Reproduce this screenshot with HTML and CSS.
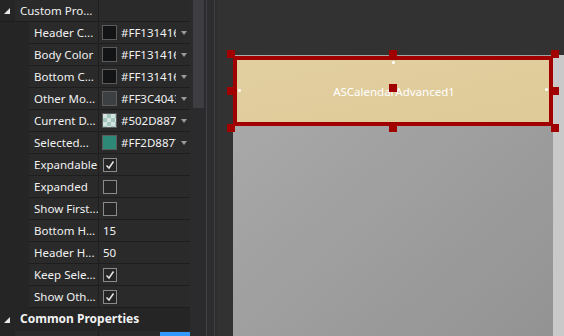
FILE: index.html
```html
<!DOCTYPE html>
<html lang="en">
<head>
    <meta charset="UTF-8">
    <meta name="viewport" content="width=device-width, initial-scale=1.0">
    <title>Designer</title>
    <link rel="stylesheet" href="styles.css">
</head>
<body>

<div class="props">
    <!-- Custom Properties -->
    <div class="cat">
        <div class="toggle">
            <svg width="7" height="7" viewBox="0 0 7 7"><polygon points="6,0 6,6 0,6" fill="#e8e8e8"/></svg>
        </div>
        <div class="cat-name">Custom Pro...</div>
        <div class="cat-value"></div>
    </div>

    <div class="row">
        <div class="name">Header C...</div>
        <div class="value"><span class="swatch" style="background:#131416"></span><span class="text">#FF131416</span><span class="drop"></span></div>
    </div>
    <div class="row">
        <div class="name">Body Color</div>
        <div class="value"><span class="swatch" style="background:#131416"></span><span class="text">#FF131416</span><span class="drop"></span></div>
    </div>
    <div class="row">
        <div class="name">Bottom C...</div>
        <div class="value"><span class="swatch" style="background:#131416"></span><span class="text">#FF131416</span><span class="drop"></span></div>
    </div>
    <div class="row">
        <div class="name">Other Mo...</div>
        <div class="value"><span class="swatch" style="background:#3c4043"></span><span class="text">#FF3C4043</span><span class="drop"></span></div>
    </div>
    <div class="row">
        <div class="name">Current D...</div>
        <div class="value"><span class="swatch checker"></span><span class="text">#502D8877</span><span class="drop"></span></div>
    </div>
    <div class="row">
        <div class="name">Selected...</div>
        <div class="value"><span class="swatch" style="background:#2d8877"></span><span class="text">#FF2D8877</span><span class="drop"></span></div>
    </div>
    <div class="row">
        <div class="name">Expandable</div>
        <div class="value"><span class="check on"><svg width="12" height="12" viewBox="0 0 12 12"><path d="M2.5 6.5 L5 9 L9.5 2.5" fill="none" stroke="#e6e6e6" stroke-width="1.5"/></svg></span></div>
    </div>
    <div class="row">
        <div class="name">Expanded</div>
        <div class="value"><span class="check"></span></div>
    </div>
    <div class="row">
        <div class="name">Show First...</div>
        <div class="value"><span class="check"></span></div>
    </div>
    <div class="row">
        <div class="name">Bottom H...</div>
        <div class="value"><span class="num">15</span></div>
    </div>
    <div class="row">
        <div class="name">Header H...</div>
        <div class="value"><span class="num">50</span></div>
    </div>
    <div class="row">
        <div class="name">Keep Sele...</div>
        <div class="value"><span class="check on"><svg width="12" height="12" viewBox="0 0 12 12"><path d="M2.5 6.5 L5 9 L9.5 2.5" fill="none" stroke="#e6e6e6" stroke-width="1.5"/></svg></span></div>
    </div>
    <div class="row">
        <div class="name">Show Oth...</div>
        <div class="value"><span class="check on"><svg width="12" height="12" viewBox="0 0 12 12"><path d="M2.5 6.5 L5 9 L9.5 2.5" fill="none" stroke="#e6e6e6" stroke-width="1.5"/></svg></span></div>
    </div>

    <!-- Common Properties -->
    <div class="cat common">
        <div class="toggle">
            <svg width="7" height="7" viewBox="0 0 7 7"><polygon points="6,0 6,6 0,6" fill="#e8e8e8"/></svg>
        </div>
        <div class="cat-title">Common Properties</div>
    </div>
    <div class="row sub">
        <div class="name"></div>
        <div class="value"><span class="blue"></span></div>
    </div>
</div>

<div class="splitter">
    <div class="vscroll"><div class="thumb"></div></div>
    <div class="gap"></div>
</div>

<div class="designer">
    <div class="form">
        <div class="canvas">
            <div class="control">
                <span class="caption">ASCalendarAdvanced1</span>
                <span class="dot dot-left"></span>
                <span class="dot dot-top"></span>
                <span class="dot dot-right"></span>
                <span class="handle h-tl"></span>
                <span class="handle h-tm"></span>
                <span class="handle h-tr"></span>
                <span class="handle h-ml"></span>
                <span class="handle h-mm"></span>
                <span class="handle h-mr"></span>
                <span class="handle h-bl"></span>
                <span class="handle h-bm"></span>
                <span class="handle h-br"></span>
            </div>
        </div>
        <div class="edge"></div>
    </div>
</div>

</body>
</html>
```

FILE: styles.css
```css
body {
    margin: 0;
    width: 564px;
    height: 336px;
    overflow: hidden;
    display: flex;
    background-color: #252526;
    font-family: "Noto Sans", "Open Sans", sans-serif;
    font-size: 11.5px;
    color: #f1f1f1;
}

/* property grid */
.props {
    width: 190px;
    height: 336px;
    overflow: hidden;
    flex-shrink: 0;
    background-color: #252526;
}

.cat, .row {
    display: flex;
    height: 21px;
    border-bottom: 1px solid #1e1e1e;
}

.toggle {
    width: 15px;
    display: flex;
    justify-content: center;
    align-items: center;
    padding-top: 2px;
    box-sizing: border-box;
}

.cat-name {
    width: 78px;
    padding-left: 5px;
    line-height: 21px;
    background-color: #2a2a2b;
    border-right: 1px solid #1e1e1e;
}

.cat-value {
    flex: 1;
    background-color: #2a2a2b;
}

.cat-title {
    flex: 1;
    padding-left: 5px;
    line-height: 21px;
    font-weight: bold;
    font-size: 12px;
}

.common {
    border-bottom: none;
    height: 23px;
}

.row {
    margin-left: 29px;
}

.row.sub {
    margin-left: 15px;
}

.row.sub .name {
    width: 78px;
}

.name {
    width: 64px;
    padding-left: 5px;
    line-height: 21px;
    white-space: nowrap;
    overflow: hidden;
    background-color: #2a2a2b;
    border-right: 1px solid #1e1e1e;
}

.value {
    flex: 1;
    display: flex;
    align-items: center;
    padding-left: 3px;
    background-color: #2a2a2b;
    position: relative;
}

.swatch {
    width: 13px;
    height: 13px;
    border: 1px solid #5c5c5c;
    flex-shrink: 0;
}

.checker {
    background: repeating-conic-gradient(#a4c5bd 0 25%, #d4e4e0 0 50%) 0 0 / 8px 8px;
}

.text {
    width: 55px;
    margin-left: 4px;
    overflow: hidden;
    white-space: nowrap;
}

.drop {
    margin-left: 5px;
    width: 0;
    height: 0;
    border-left: 3.5px solid transparent;
    border-right: 3.5px solid transparent;
    border-top: 4px solid #9a9a9a;
}

.num {
    padding-left: 1px;
}

.check {
    width: 12px;
    height: 12px;
    margin-left: 1px;
    border: 1px solid #8a8a8a;
    background-color: #252526;
    display: flex;
    align-items: center;
    justify-content: center;
}

.blue {
    position: absolute;
    right: 0;
    top: 1px;
    width: 30px;
    height: 6px;
    background-color: #3399ff;
}

/* splitter and scrollbar */
.splitter {
    width: 27px;
    flex-shrink: 0;
    display: flex;
    background-color: #2d2d30;
}

.vscroll {
    width: 17px;
    background-color: #2b2b2e;
    border-right: 1px solid #3f3f46;
    padding: 0 2px 0 3px;
    box-sizing: border-box;
}

.thumb {
    height: 108px;
    background-color: #3e3e42;
}

.gap {
    width: 7px;
    border-right: 1px solid #3f3f46;
}

/* designer surface */
.designer {
    flex: 1;
    box-sizing: border-box;
    height: 336px;
    background-color: #323232;
    padding: 55px 0 0 16px;
}

.form {
    display: flex;
    height: 100%;
}

.canvas {
    width: 320px;
    padding-top: 1px;
    background: linear-gradient(to bottom right, #ababab, #939393);
}

.edge {
    width: 11px;
    background-color: #c9c9c9;
}

.control {
    position: relative;
    height: 62px;
    border: 4px solid #a00000;
    background: linear-gradient(to bottom right, #e2cf9f, #dfca99);
    display: flex;
    align-items: center;
    justify-content: center;
}

.caption {
    color: #ffffff;
    font-size: 11.5px;
    padding-left: 2px;
}

.dot {
    position: absolute;
    width: 3px;
    height: 3px;
    border-radius: 50%;
    background-color: #ffffff;
}

.dot-left { left: 1px; top: 29px; }
.dot-top { left: 155px; top: 1px; }
.dot-right { right: 1px; top: 28px; }

.handle {
    position: absolute;
    width: 8px;
    height: 8px;
    background-color: #a00000;
}

.h-tl { left: -10px; top: -10px; }
.h-tm { left: 152px; top: -10px; }
.h-tr { left: 314px; top: -10px; }
.h-ml { left: -10px; top: 27px; }
.h-mm { left: 152px; top: 24px; }
.h-mr { left: 314px; top: 27px; }
.h-bl { left: -10px; top: 64px; }
.h-bm { left: 152px; top: 64px; }
.h-br { left: 314px; top: 64px; }
```
